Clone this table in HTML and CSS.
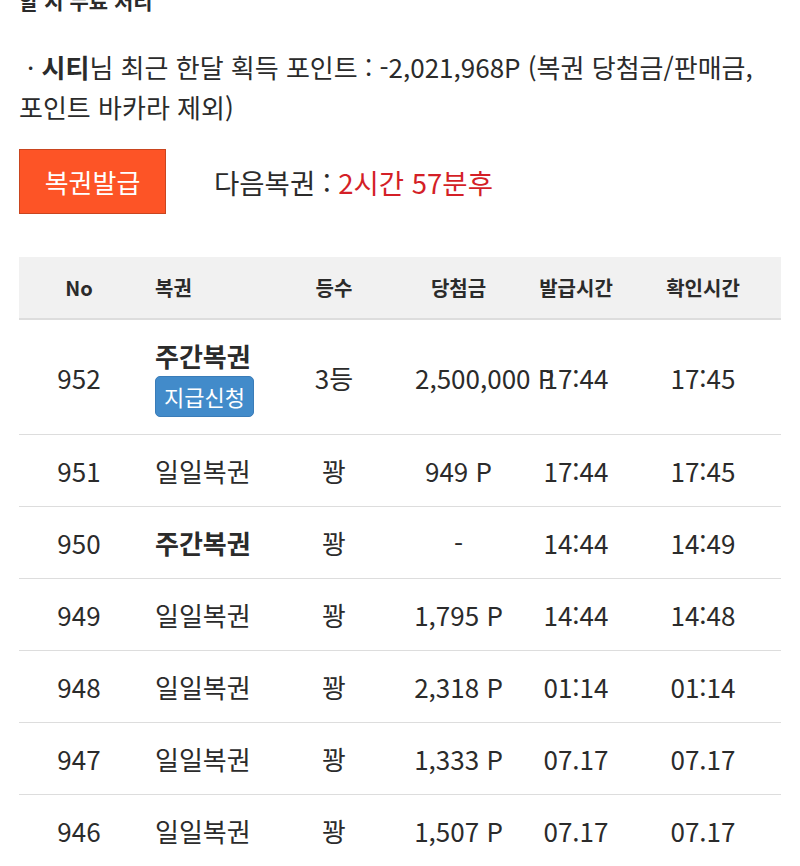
FILE: index.html
```html
<!DOCTYPE html>
<html lang="ko">
<head>
<meta charset="utf-8">
<link rel="stylesheet" href="styles.css">
</head>
<body>
<div class="page">
  <p class="cut">할 시 무료 처리</p>
  <p class="info"><span class="dot">·</span> <b>시티</b>님 최근 한달 획득 포인트 : -2,021,968P (복권 당첨금/판매금, 포인트 바카라 제외)</p>
  <div class="issue">
    <button class="btn-issue">복권발급</button>
    <span class="next">다음복권 : <span class="red">2시간 57분후</span></span>
  </div>
  <table class="list">
    <colgroup>
      <col class="c1"><col class="c2"><col class="c3"><col class="c4"><col class="c5"><col class="c6">
    </colgroup>
    <thead>
      <tr><th>No</th><th class="left">복권</th><th>등수</th><th>당첨금</th><th>발급시간</th><th>확인시간</th></tr>
    </thead>
    <tbody>
      <tr class="tall"><td>952</td><td class="left"><b>주간복권</b><br><span class="badge">지급신청</span></td><td>3등</td><td class="over">2,500,000 P</td><td>17:44</td><td>17:45</td></tr>
      <tr><td>951</td><td class="left">일일복권</td><td>꽝</td><td>949 P</td><td>17:44</td><td>17:45</td></tr>
      <tr><td>950</td><td class="left"><b>주간복권</b></td><td>꽝</td><td>-</td><td>14:44</td><td>14:49</td></tr>
      <tr><td>949</td><td class="left">일일복권</td><td>꽝</td><td>1,795 P</td><td>14:44</td><td>14:48</td></tr>
      <tr><td>948</td><td class="left">일일복권</td><td>꽝</td><td>2,318 P</td><td>01:14</td><td>01:14</td></tr>
      <tr><td>947</td><td class="left">일일복권</td><td>꽝</td><td>1,333 P</td><td>07.17</td><td>07.17</td></tr>
      <tr><td>946</td><td class="left">일일복권</td><td>꽝</td><td>1,507 P</td><td>07.17</td><td>07.17</td></tr>
    </tbody>
  </table>
</div>
</body>
</html>
```
FILE: styles.css
```css
html, body {
  margin: 0;
  padding: 0;
  background: #fff;
}
body {
  font-family: "Noto Sans CJK KR", "Noto Sans", sans-serif;
  color: #2b2b2b;
  overflow: hidden;
}
.page {
  padding: 0 19px;
}
.cut {
  margin: -20px 0 0;
  font-size: 21px;
  font-weight: bold;
  line-height: 40px;
}
.info {
  margin: 27px 0 0;
  font-size: 26px;
  line-height: 40px;
}
.info .dot {
  margin-left: 8px;
}
.info b {
  font-weight: bold;
}
.issue {
  display: flex;
  align-items: center;
  gap: 48px;
  margin-top: 22px;
}
.btn-issue {
  width: 147px;
  height: 65px;
  background: #fd5426;
  border: 1px solid #c9451f;
  color: #fff;
  font-family: inherit;
  font-size: 26px;
  padding: 0;
}
.next {
  font-size: 27.5px;
}
.red {
  color: #d41f27;
}
.list {
  margin-top: 43px;
  width: 762px;
  table-layout: fixed;
  border-collapse: collapse;
}
.c1 { width: 120px; }
.c2 { width: 139px; }
.c3 { width: 112px; }
.c4 { width: 137px; }
.c5 { width: 98px; }
.c6 { width: 156px; }
.list th {
  background: #f1f1f1;
  height: 61px;
  font-size: 20px;
  font-weight: bold;
  text-align: center;
  border-bottom: 2px solid #ddd;
  padding: 0;
}
.list td {
  height: 71px;
  font-size: 26px;
  text-align: center;
  border-bottom: 1px solid #ddd;
  padding: 0;
  white-space: nowrap;
}
.list tr.tall td {
  height: 114px;
}
.list .left {
  text-align: left;
  padding-left: 16px;
}
.list td.over {
  padding-left: 25px;
}
.badge {
  display: inline-block;
  margin-top: 2px;
  background: #428bca;
  color: #fff;
  font-size: 22px;
  line-height: 39px;
  padding: 0 8px;
  border-radius: 5px;
  border: 1px solid #3a7cb8;
}
```
